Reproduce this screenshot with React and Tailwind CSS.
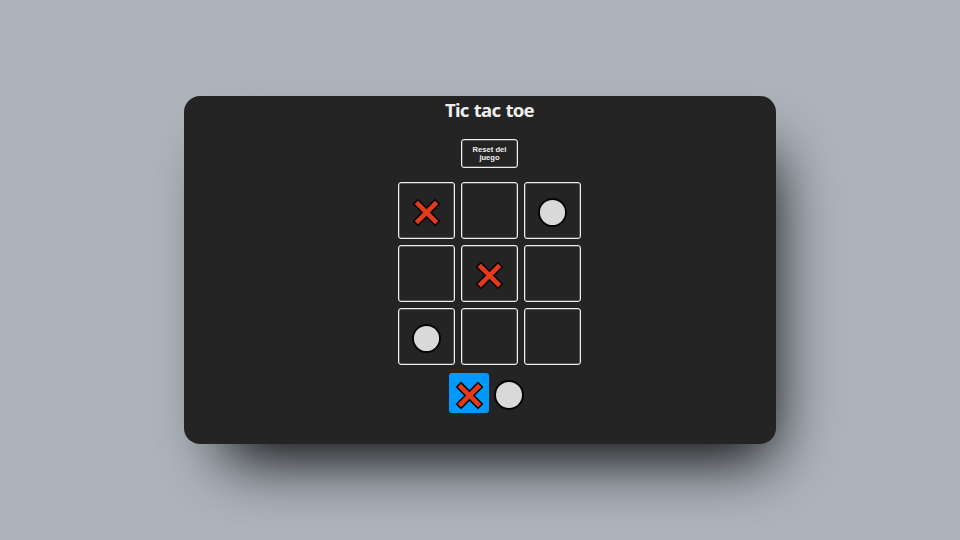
function Cross({ className }) {
  return (
    <svg viewBox="0 0 30 30" className={className} fill="none">
      <path d="M3.4 3.4 26.6 26.6M26.6 3.4 3.4 26.6" stroke="#080808" strokeWidth="8" />
      <path d="M4.5 4.5 25.5 25.5M25.5 4.5 4.5 25.5" stroke="#e5391b" strokeWidth="4.7" />
    </svg>
  );
}

function Circle({ className }) {
  return (
    <svg viewBox="0 0 30 30" className={className}>
      <circle cx="15" cy="15" r="14" fill="#d9d9d9" stroke="#050505" strokeWidth="2" />
    </svg>
  );
}

const board = ["x", null, "o", null, "x", null, "o", null, null];

function Cell({ value }) {
  return (
    <div className="flex size-[57px] items-center justify-center rounded-[3px] border border-[#eee] pt-[4px] shadow-[inset_0_0_0_0.5px_#eeeeee80]">
      {value === "x" && <Cross className="size-[29px]" />}
      {value === "o" && <Circle className="size-[29px]" />}
    </div>
  );
}

export default function App() {
  return (
    <div className="flex h-[540px] w-[960px] items-center justify-center bg-[#adb4bc]">
      <main className="flex h-[348px] w-[592px] flex-col items-center rounded-[16px] bg-[#242424] pl-[19px] text-[#eee] shadow-[18px_36px_60px_-22px_#000]">
        <h1 className="h-[28px] font-['Noto_Sans','Open_Sans',sans-serif] text-[18.6px] leading-[27px] font-bold tracking-[-0.75px] whitespace-nowrap [word-spacing:1px]">
          Tic tac toe
        </h1>
        <button className="mt-[15px] h-[29px] w-[57px] rounded-[3px] border border-[#eee] pt-px font-['Liberation_Sans',Arial,sans-serif] text-[7.6px] leading-[8.5px] font-bold shadow-[inset_0_0_0_0.5px_#eeeeee80]">
          Reset del
          <br />
          juego
        </button>
        <section className="mt-[14px] grid grid-cols-3 gap-[6px]">
          {board.map((value, i) => (
            <Cell key={i} value={value} />
          ))}
        </section>
        <section className="mt-[8px] mr-px flex">
          <div className="flex size-[40px] items-center justify-center rounded-[3px] bg-[#0099ff] pt-[4px]">
            <Cross className="size-[29px]" />
          </div>
          <div className="flex size-[40px] items-center justify-center pt-[4px]">
            <Circle className="size-[30px]" />
          </div>
        </section>
      </main>
    </div>
  );
}
